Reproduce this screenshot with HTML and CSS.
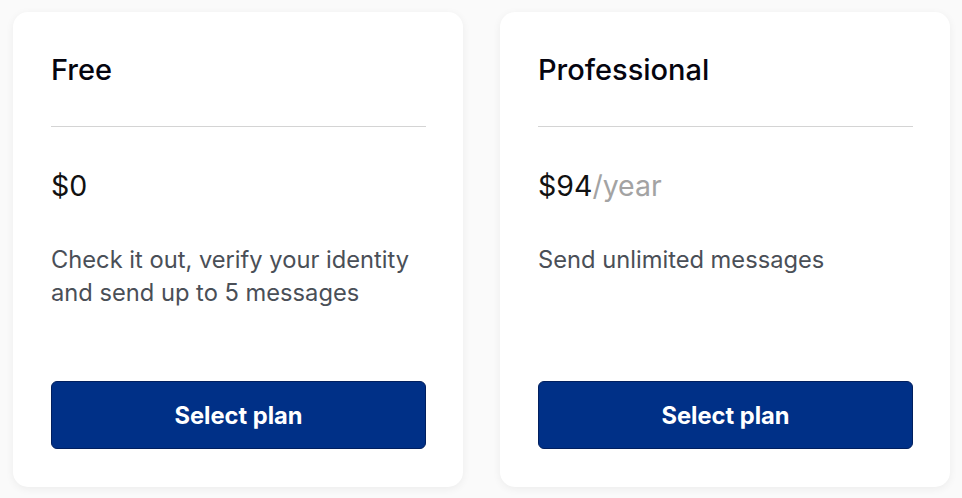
FILE: index.html
```html
<!DOCTYPE html>
<html lang="en">
<head>
    <meta charset="UTF-8">
    <meta name="viewport" content="width=device-width, initial-scale=1.0">
    <title>Plans</title>
    <link rel="stylesheet" href="styles.css">
</head>
<body>
    <div class="plans">
        <!-- Free plan -->
        <div class="plan">
            <h2 class="plan-name">Free</h2>
            <div class="price">$0</div>
            <p class="desc">Check it out, verify your identity and send up to 5 messages</p>
            <button class="select">Select plan</button>
        </div>

        <!-- Professional plan -->
        <div class="plan">
            <h2 class="plan-name">Professional</h2>
            <div class="price">$94<span class="period">/year</span></div>
            <p class="desc">Send unlimited messages</p>
            <button class="select">Select plan</button>
        </div>
    </div>
</body>
</html>
```

FILE: styles.css
```css
body {
    margin: 0;
    padding: 12px 11px 11px 13px;
    background-color: #fafafa;
    font-family: Inter, "Noto Sans", sans-serif;
}
.plans {
    display: grid;
    grid-template-columns: 450px 450px;
    gap: 37px;
}
.plan {
    display: flex;
    flex-direction: column;
    height: 475px;
    box-sizing: border-box;
    padding: 38px 37px 38px 38px;
    background-color: #fff;
    border-radius: 15px;
    box-shadow: 0 2px 8px rgba(0, 0, 0, 0.06);
}
.plan-name {
    margin: 0;
    padding: 0 0 36px;
    font-size: 29px;
    font-weight: 500;
    line-height: 40px;
    color: #05050f;
    border-bottom: 1px solid #d4d4d4;
}
.price {
    margin-top: 39px;
    font-size: 28.5px;
    line-height: 40px;
    color: #111;
}
.period {
    color: #a3a3a3;
}
.desc {
    margin: 37px 0 0;
    font-size: 23.7px;
    line-height: 33px;
    color: #4a4f57;
}
.select {
    margin-top: auto;
    height: 68px;
    border: 1px solid #011f5e;
    border-radius: 6px;
    background-color: #003087;
    color: #fff;
    font-family: Inter, "Noto Sans", sans-serif;
    font-size: 23.7px;
    font-weight: 700;
}
```
